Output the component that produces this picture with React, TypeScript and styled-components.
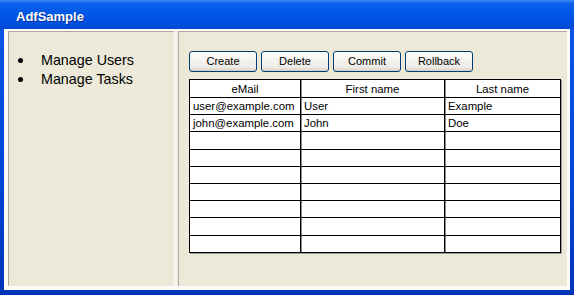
import styled, { createGlobalStyle } from "styled-components";

const GlobalStyle = createGlobalStyle`
    html, body {
        margin: 0;
        padding: 0;
        background: #ffffff;
    }
    body {
        font-family: "Liberation Sans", Arial, sans-serif;
    }
`;

const Window = styled.div`
    width: 574px;
    height: 295px;
    display: flex;
    flex-direction: column;
    background: linear-gradient(#0a5ae6, #0046d6 60%, #0034b8);
    box-sizing: border-box;
`;

const TitleBar = styled.div`
    height: 29px;
    flex: none;
    display: flex;
    align-items: center;
    padding: 3px 0 0 16px;
    background: linear-gradient(#3b8cf8 0%, #0b62ec 12%, #0058e8 45%, #0052e2 75%, #0048d4 100%);
    color: #ffffff;
    font-size: 13px;
    font-weight: bold;
    text-shadow: 1px 1px 0 #0a2c8c;
    box-sizing: border-box;
`;

const Body = styled.div`
    flex: 1;
    margin: 0 4px 5px 4px;
    padding: 2px 3px 4px 4px;
    background: #fdfcf8;
    display: flex;
    box-sizing: border-box;
`;

const Panel = styled.div<{ $width?: number }>`
    ${({ $width }) => ($width ? `width: ${$width}px; flex: none;` : "flex: 1;")}
    background: #ece9d8;
    border-top: 1px solid #aca899;
    border-left: 1px solid #aca899;
    box-sizing: border-box;
`;

const Splitter = styled.div`
    width: 4px;
    flex: none;
    background: #f3f1e7;
    border-left: 1px solid #fdfcf8;
    box-sizing: border-box;
`;

const NavList = styled.ul`
    margin: 19px 0 0 0;
    padding: 0 0 0 9px;
    list-style: none;
    font-size: 14.3px;
    line-height: 19px;
    color: #000000;
`;

const NavItem = styled.li`
    display: flex;
    align-items: center;

    &::before {
        content: "";
        width: 5px;
        height: 5px;
        margin-right: 18px;
        border-radius: 50%;
        background: #000000;
        flex: none;
    }
`;

const Content = styled.div`
    padding: 19px 0 0 10px;
    display: flex;
    flex-direction: column;
    gap: 7px;
`;

const Toolbar = styled.div`
    display: flex;
    gap: 4px;
`;

const Button = styled.button`
    width: 68px;
    height: 21px;
    padding: 0 0 2px 0;
    border: 1px solid #003c74;
    border-radius: 3px;
    background: linear-gradient(#ffffff 0%, #f4f3ee 40%, #ecebe6 80%, #d6d0c5 100%);
    font-family: "Liberation Sans", Arial, sans-serif;
    font-size: 11px;
    color: #000000;
    box-sizing: border-box;
`;

const Grid = styled.table`
    width: 372px;
    border-collapse: collapse;
    background: #ffffff;
    font-size: 11.4px;
    color: #000000;
    box-shadow: 1px 1px 0 #9a9a9a;

    th, td {
        border: 1px solid #000000;
        padding: 0 3px;
        box-sizing: border-box;
        white-space: nowrap;
    }

    th {
        height: 18px;
        font-weight: normal;
        text-align: center;
    }

    td {
        height: 17.2px;
        text-align: left;
    }

    th:not(:last-child), td:not(:last-child) {
        box-shadow: 1px 0 0 #8c8c8c;
    }
`;

interface Person {
    email: string;
    first: string;
    last: string;
}

const people: Person[] = [
    { email: "user@example.com", first: "User", last: "Example" },
    { email: "john@example.com", first: "John", last: "Doe" },
];

const ROWS = 9;

const App = () => {
    const rows = Array.from({ length: ROWS }, (_, i) => people[i]);

    return (
        <>
            <GlobalStyle />
            <Window>
                <TitleBar>AdfSample</TitleBar>
                <Body>
                    <Panel $width={166}>
                        <NavList>
                            <NavItem>Manage Users</NavItem>
                            <NavItem>Manage Tasks</NavItem>
                        </NavList>
                    </Panel>
                    <Splitter />
                    <Panel>
                        <Content>
                            <Toolbar>
                                <Button>Create</Button>
                                <Button>Delete</Button>
                                <Button>Commit</Button>
                                <Button>Rollback</Button>
                            </Toolbar>
                            <Grid>
                                <colgroup>
                                    <col style={{ width: 111 }} />
                                    <col style={{ width: 144 }} />
                                    <col style={{ width: 116 }} />
                                </colgroup>
                                <thead>
                                    <tr>
                                        <th>eMail</th>
                                        <th>First name</th>
                                        <th>Last name</th>
                                    </tr>
                                </thead>
                                <tbody>
                                    {rows.map((person, i) => (
                                        <tr key={i}>
                                            <td>{person?.email}</td>
                                            <td>{person?.first}</td>
                                            <td>{person?.last}</td>
                                        </tr>
                                    ))}
                                </tbody>
                            </Grid>
                        </Content>
                    </Panel>
                </Body>
            </Window>
        </>
    );
};

export default App;
